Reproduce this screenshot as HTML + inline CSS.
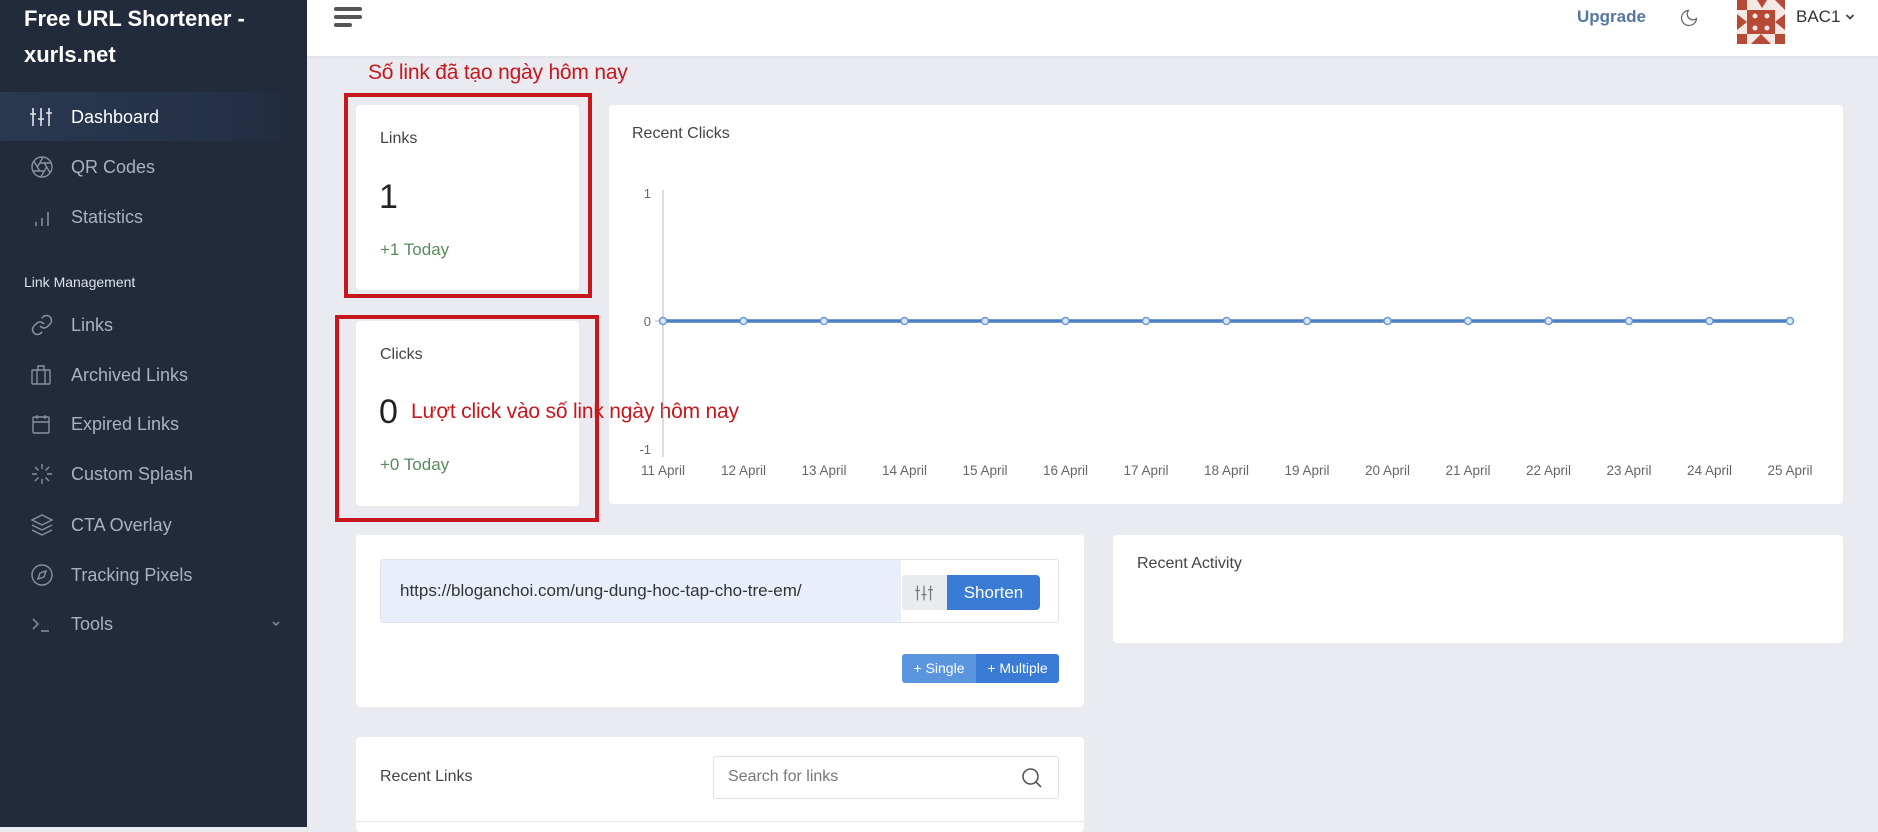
<!DOCTYPE html>
<html><head><meta charset="utf-8"><style>
*{margin:0;padding:0;box-sizing:border-box}
body{width:1878px;height:827px;overflow:hidden;background:#e9ebf0;font-family:"Liberation Sans",sans-serif;position:relative}
.abs{position:absolute}
#sb{left:0;top:0;width:307px;height:827px;background:#212b3b}
.brand{left:24px;color:#fff;font-weight:bold;font-size:22px}
.mi{left:0;width:307px;height:50px;display:flex;align-items:center;color:#aab2bf;font-size:18px}
.mi svg{position:absolute;left:30px}
.mi span{position:absolute;left:71px}
.card{background:#fff;border-radius:4px}
.red{border:4px solid #c8161d}
.ann{color:#c8161d;font-size:21px;font-family:"Liberation Sans",sans-serif;letter-spacing:-0.2px}
.ct{font-size:16px;color:#444}
</style></head><body>
<div id="sb" class="abs">
<div class="abs brand" style="top:6px">Free URL Shortener -</div>
<div class="abs brand" style="top:42px">xurls.net</div>
<div class="abs" style="left:0;top:92px;width:307px;height:49px;background:linear-gradient(90deg,#2a3950,#243147 70%,#212b3b)"></div>
<div class="abs mi" style="top:92px;color:#fff"><svg width="22" height="22" viewBox="0 0 22 22" stroke="#dfe4ea" stroke-width="1.6" fill="none"><path d="M3 2v18M11 2v18M19 2v18M0 8h6M8 13h6M16 7h6"/></svg><span>Dashboard</span></div>
<div class="abs mi" style="top:142px"><svg width="24" height="24" viewBox="0 0 24 24" stroke="#8891a0" stroke-width="1.4" fill="none"><circle cx="12" cy="12" r="10"/><path d="M14.3 8l5.7 9.6M9.7 8h11.4M7.4 12l5.7-9.9M9.7 16L4 6.4M14.3 16H2.8M16.6 12l-5.7 9.9"/></svg><span>QR Codes</span></div>
<div class="abs mi" style="top:192px"><svg width="22" height="22" viewBox="0 0 22 22" stroke="#8891a0" stroke-width="1.5"><path d="M6 20v-4M12 20v-8M18 20V6"/></svg><span>Statistics</span></div>
<div class="abs" style="left:24px;top:274px;color:#dfe3e8;font-size:14px">Link Management</div>
<div class="abs mi" style="top:300px"><svg width="24" height="24" viewBox="0 0 24 24" stroke="#8891a0" stroke-width="1.5" fill="none"><path d="M10 13a5 5 0 0 0 7.5.5l3-3a5 5 0 0 0-7-7l-1.7 1.7M14 11a5 5 0 0 0-7.5-.5l-3 3a5 5 0 0 0 7 7l1.7-1.7"/></svg><span>Links</span></div>
<div class="abs mi" style="top:350px"><svg width="22" height="22" viewBox="0 0 22 22" stroke="#8891a0" stroke-width="1.4" fill="none"><rect x="2" y="6" width="18" height="14" rx="1"/><path d="M8 6V2h6v4M7 6v14M15 6v14"/></svg><span>Archived Links</span></div>
<div class="abs mi" style="top:399px"><svg width="22" height="22" viewBox="0 0 22 22" stroke="#8891a0" stroke-width="1.4" fill="none"><rect x="3" y="4" width="16" height="16" rx="1"/><path d="M3 9h16M7 2v4M15 2v4"/></svg><span>Expired Links</span></div>
<div class="abs mi" style="top:449px"><svg width="24" height="24" viewBox="0 0 24 24" stroke="#8891a0" stroke-width="1.4"><path d="M12 2v5M12 17v5M2 12h5M17 12h5M5 5l3.5 3.5M15.5 15.5L19 19M5 19l3.5-3.5M15.5 8.5L19 5"/></svg><span>Custom Splash</span></div>
<div class="abs mi" style="top:500px"><svg width="24" height="24" viewBox="0 0 24 24" stroke="#8891a0" stroke-width="1.4" fill="none"><path d="M12 2L2 7l10 5 10-5zM2 12l10 5 10-5M2 17l10 5 10-5"/></svg><span>CTA Overlay</span></div>
<div class="abs mi" style="top:550px"><svg width="24" height="24" viewBox="0 0 24 24" stroke="#8891a0" stroke-width="1.4" fill="none"><circle cx="12" cy="12" r="10"/><path d="M16 8l-2 6-6 2 2-6z"/></svg><span>Tracking Pixels</span></div>
<div class="abs mi" style="top:599px"><svg width="22" height="22" viewBox="0 0 22 22" stroke="#8891a0" stroke-width="1.5" fill="none"><path d="M3 6l5 5-5 5M11 18h8"/></svg><span>Tools</span><svg style="left:270px" width="12" height="12" viewBox="0 0 12 12" stroke="#8891a0" stroke-width="1.4" fill="none"><path d="M3 4l3 3 3-3"/></svg></div>
</div>
<!-- header -->
<div class="abs" style="left:307px;top:0;width:1571px;height:56px;background:#fff;box-shadow:0 1px 3px rgba(0,0,0,.06)"></div>
<div class="abs" style="left:334px;top:7px;width:28px;height:4px;background:#555;border-radius:2px"></div>
<div class="abs" style="left:334px;top:15px;width:28px;height:4px;background:#555;border-radius:2px"></div>
<div class="abs" style="left:334px;top:23px;width:18px;height:4px;background:#555;border-radius:2px"></div>
<div class="abs" style="left:1577px;top:7px;color:#5577a0;font-size:17px;font-weight:bold">Upgrade</div>
<svg class="abs" style="left:1679px;top:8px" width="20" height="20" viewBox="0 0 24 24" fill="none" stroke="#666" stroke-width="1.5"><path d="M21 12.8A9 9 0 1 1 11.2 3a7 7 0 0 0 9.8 9.8z"/></svg>
<svg class="abs" style="left:1737px;top:0" width="48" height="44" viewBox="0 0 48 44"><rect width="48" height="44" fill="#f4e8e4"/><path d="M0 0h10v10H0zM20 0h10l-5 8zM38 0h10v10zM0 34h10v10H0zM38 34h10v10H38zM10 10h28v24H10z" fill="#b74a37"/><path d="M0 14l10 8-10 8zM48 14l-10 8 10 8zM14 44l10-10 10 10z" fill="#b74a37"/><circle cx="18" cy="16" r="2.5" fill="#f4e8e4"/><circle cx="30" cy="16" r="2.5" fill="#f4e8e4"/><circle cx="18" cy="28" r="2.5" fill="#f4e8e4"/><circle cx="30" cy="28" r="2.5" fill="#f4e8e4"/></svg>
<div class="abs" style="left:1796px;top:7px;color:#333;font-size:17px">BAC1</div>
<svg class="abs" style="left:1844px;top:11px" width="12" height="12" viewBox="0 0 12 12" stroke="#444" stroke-width="1.8" fill="none"><path d="M2.5 4l3.5 3.5L9.5 4"/></svg>
<!-- annotations -->
<div class="abs ann" style="left:368px;top:61px">Số link đã tạo ngày hôm nay</div>
<!-- links card -->
<div class="abs card" style="left:356px;top:105px;width:223px;height:185px"></div>
<div class="abs red" style="left:344px;top:93px;width:248px;height:205px"></div>
<div class="abs ct" style="left:380px;top:130px">Links</div>
<div class="abs" style="left:379px;top:178px;font-size:34px;color:#222">1</div>
<div class="abs" style="left:380px;top:240px;font-size:17px;color:#5b8a5e">+1 Today</div>
<!-- clicks card -->
<div class="abs card" style="left:356px;top:321px;width:223px;height:185px"></div>
<div class="abs red" style="left:335px;top:315px;width:264px;height:207px"></div>
<div class="abs ct" style="left:380px;top:346px">Clicks</div>
<div class="abs" style="left:379px;top:393px;font-size:34px;color:#222">0</div>
<div class="abs" style="left:380px;top:455px;font-size:17px;color:#5b8a5e">+0 Today</div>
<!-- chart card -->
<div class="abs card" style="left:609px;top:105px;width:1234px;height:399px"></div>
<div class="abs ct" style="left:632px;top:125px">Recent Clicks</div>
<div class="abs ann" style="left:411px;top:400px">Lượt click vào số link ngày hôm nay</div>
<svg class="abs" style="left:609px;top:105px" width="1234" height="399">
<line x1="54" y1="85" x2="54" y2="352" stroke="#bbb" stroke-width="1"/>
<text x="42" y="93" font-size="13" fill="#666" text-anchor="end" font-family="Liberation Sans">1</text>
<text x="42" y="221" font-size="13" fill="#666" text-anchor="end" font-family="Liberation Sans">0</text>
<text x="42" y="349" font-size="13" fill="#666" text-anchor="end" font-family="Liberation Sans">-1</text>
<line x1="46" y1="216" x2="54" y2="216" stroke="#bbb"/>
<line x1="54" y1="216" x2="1181" y2="216" stroke="#4a7fc1" stroke-width="3.5"/>
<g fill="#dbe7f7" stroke="#6b98d0" stroke-width="1.5">
<circle cx="54" cy="216" r="3.5"/><circle cx="134.5" cy="216" r="3.5"/><circle cx="215" cy="216" r="3.5"/><circle cx="295.5" cy="216" r="3.5"/><circle cx="376" cy="216" r="3.5"/><circle cx="456.5" cy="216" r="3.5"/><circle cx="537" cy="216" r="3.5"/><circle cx="617.5" cy="216" r="3.5"/><circle cx="698" cy="216" r="3.5"/><circle cx="778.5" cy="216" r="3.5"/><circle cx="859" cy="216" r="3.5"/><circle cx="939.5" cy="216" r="3.5"/><circle cx="1020" cy="216" r="3.5"/><circle cx="1100.5" cy="216" r="3.5"/><circle cx="1181" cy="216" r="3.5"/>
</g>
<g font-size="13.5" fill="#666" text-anchor="middle" font-family="Liberation Sans">
<text x="54" y="370">11 April</text><text x="134.5" y="370">12 April</text><text x="215" y="370">13 April</text><text x="295.5" y="370">14 April</text><text x="376" y="370">15 April</text><text x="456.5" y="370">16 April</text><text x="537" y="370">17 April</text><text x="617.5" y="370">18 April</text><text x="698" y="370">19 April</text><text x="778.5" y="370">20 April</text><text x="859" y="370">21 April</text><text x="939.5" y="370">22 April</text><text x="1020" y="370">23 April</text><text x="1100.5" y="370">24 April</text><text x="1181" y="370">25 April</text>
</g></svg>
<!-- url card -->
<div class="abs card" style="left:356px;top:535px;width:728px;height:172px"></div>
<div class="abs" style="left:380px;top:559px;width:679px;height:64px;border:1px solid #e0e3e8;border-radius:3px;background:#fff"></div>
<div class="abs" style="left:381px;top:560px;width:520px;height:62px;background:#e8effb"></div>
<div class="abs" style="left:400px;top:581px;font-size:17px;color:#333">https://bloganchoi.com/ung-dung-hoc-tap-cho-tre-em/</div>
<div class="abs" style="left:902px;top:575px;width:45px;height:35px;background:#e9ecef;border-radius:3px 0 0 3px"></div>
<svg class="abs" style="left:915px;top:584px" width="18" height="18" viewBox="0 0 22 22" stroke="#777" stroke-width="1.5" fill="none"><path d="M3 2v18M11 2v18M19 2v18M0 8h6M8 13h6M16 7h6"/></svg>
<div class="abs" style="left:947px;top:575px;width:93px;height:35px;background:#3a7bd5;border-radius:0 4px 4px 0;color:#fff;font-size:17px;text-align:center;line-height:35px">Shorten</div>
<div class="abs" style="left:902px;top:654px;width:74px;height:29px;background:#5b95dd;border-radius:3px 0 0 3px;color:#fff;font-size:14px;text-align:center;line-height:29px">+ Single</div>
<div class="abs" style="left:976px;top:654px;width:83px;height:29px;background:#3a7bd5;border-radius:0 3px 3px 0;color:#fff;font-size:14px;text-align:center;line-height:29px">+ Multiple</div>
<!-- recent activity -->
<div class="abs card" style="left:1113px;top:535px;width:730px;height:108px"></div>
<div class="abs ct" style="left:1137px;top:555px">Recent Activity</div>
<!-- recent links -->
<div class="abs card" style="left:356px;top:737px;width:728px;height:95px"></div>
<div class="abs ct" style="left:380px;top:768px">Recent Links</div>
<div class="abs" style="left:713px;top:756px;width:346px;height:43px;border:1px solid #dde0e5;border-radius:3px"></div>
<div class="abs" style="left:728px;top:768px;font-size:16px;color:#777">Search for links</div>
<svg class="abs" style="left:1021px;top:767px" width="22" height="22" viewBox="0 0 22 22" stroke="#555" stroke-width="1.6" fill="none"><circle cx="9.5" cy="9.5" r="7.5"/><path d="M15 15l5 5"/></svg>
<div class="abs" style="left:356px;top:821px;width:728px;height:1px;background:#e3e6ea"></div>
</body></html>
